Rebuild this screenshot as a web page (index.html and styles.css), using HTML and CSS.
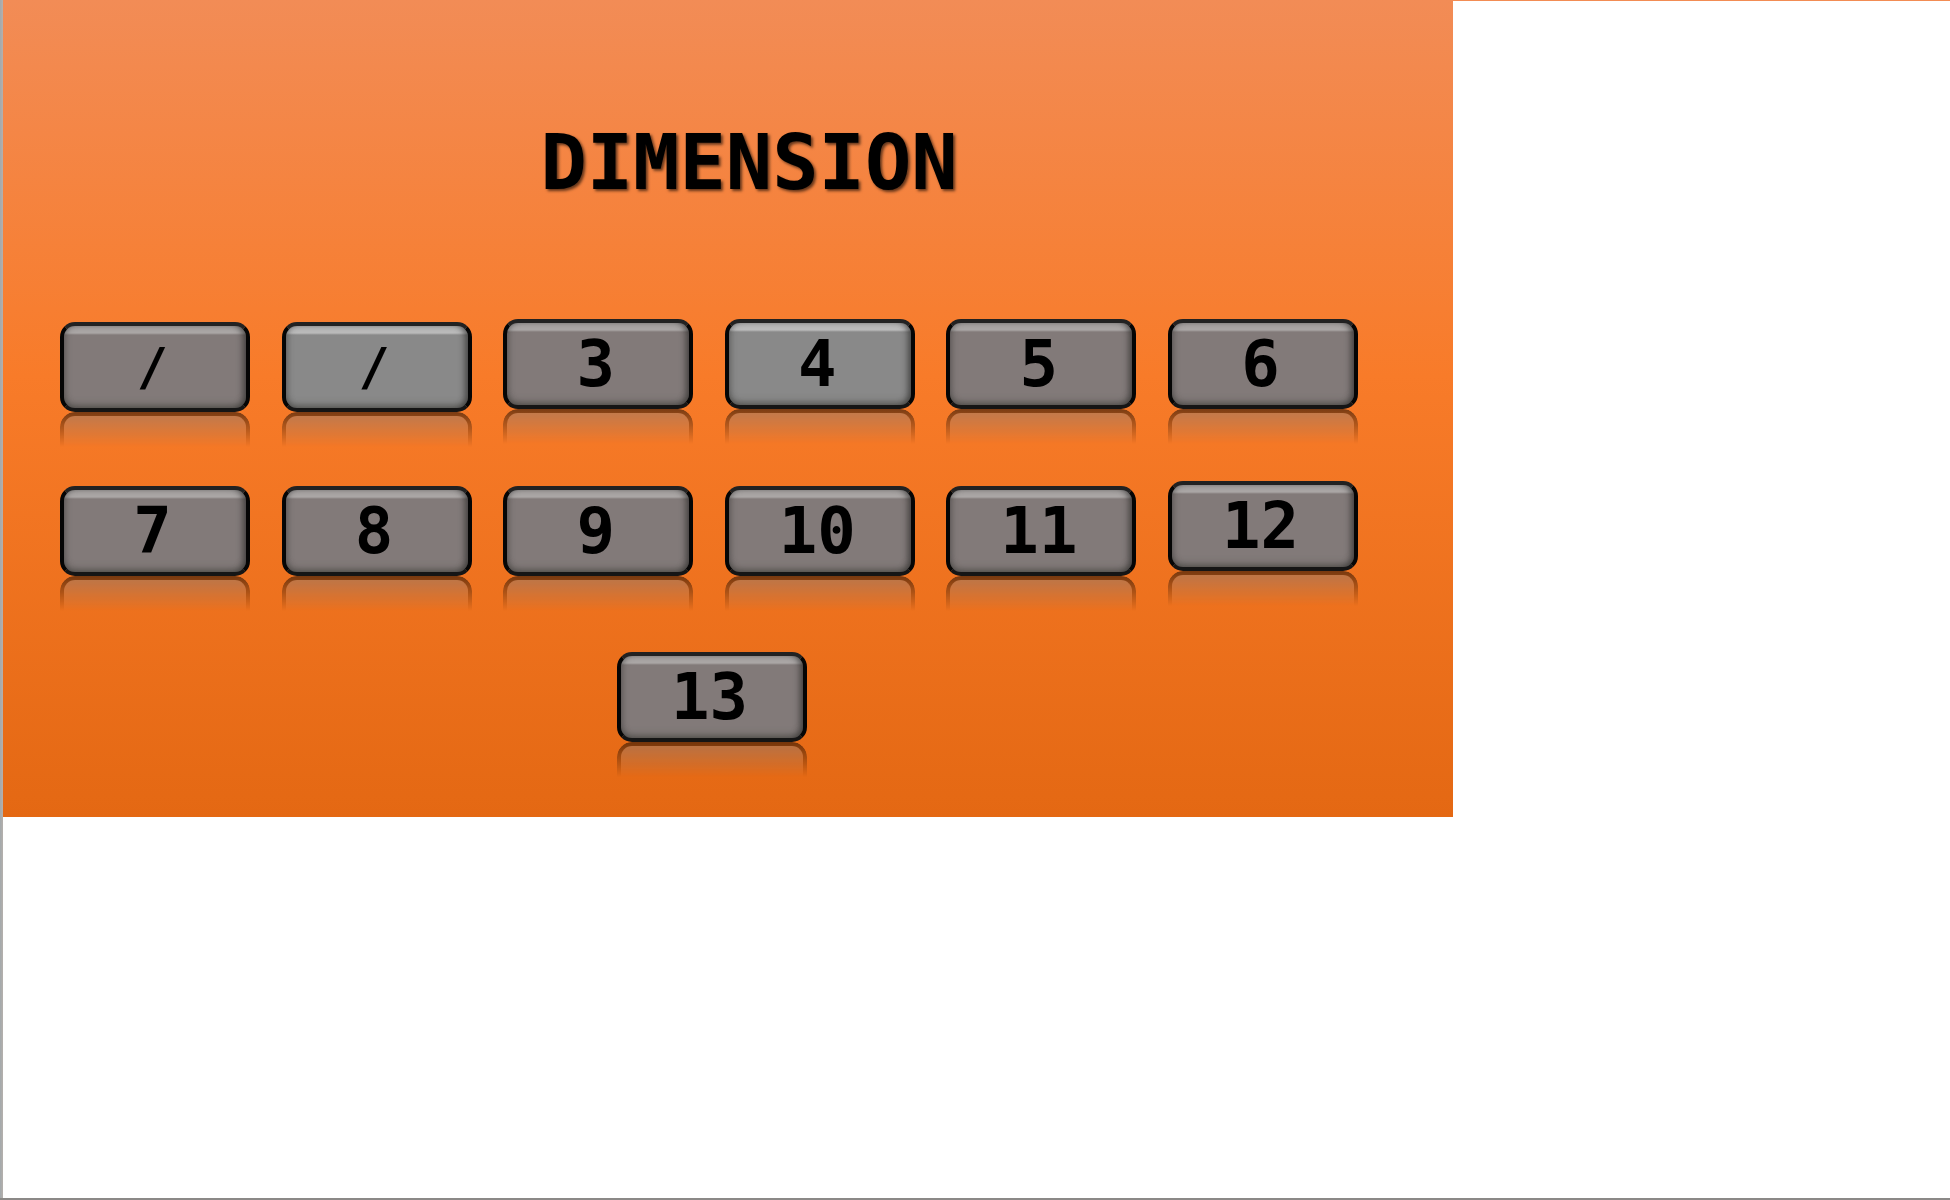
FILE: index.html
```
<!DOCTYPE html>
<html lang="en">
<head>
<meta charset="utf-8">
<title>Dimension</title>
<link rel="stylesheet" href="styles.css">
</head>
<body>
<main class="panel">
  <h1 class="title">DIMENSION</h1>
  <div class="levels">
    <div class="row row-first">
      <button type="button" class="key key-slash">/</button>
      <button type="button" class="key key-slash key-light">/</button>
      <button type="button" class="key key-raised">3</button>
      <button type="button" class="key key-raised key-light">4</button>
      <button type="button" class="key key-raised">5</button>
      <button type="button" class="key key-raised">6</button>
    </div>
    <div class="row row-second">
      <button type="button" class="key">7</button>
      <button type="button" class="key">8</button>
      <button type="button" class="key">9</button>
      <button type="button" class="key">10</button>
      <button type="button" class="key">11</button>
      <button type="button" class="key key-raised">12</button>
    </div>
    <div class="row row-last">
      <button type="button" class="key">13</button>
    </div>
  </div>
</main>
</body>
</html>
```
FILE: styles.css
```
* {
  box-sizing: border-box;
}

body {
  margin: 0;
  min-height: 100vh;
  padding-left: 3px;
  border-bottom: 2px solid #8b8987;
  background:
    linear-gradient(90deg, #a3a9ac, #b5b0ac) left / 3px 100% no-repeat,
    linear-gradient(#f28c54, #f28c54) top / 100% 1px no-repeat,
    #fff;
  font-family: "DejaVu Sans Mono", "Liberation Mono", monospace;
  color: #000;
}

.panel {
  max-width: 1450px;
  padding: 118px 95px 75px 57px;
  background: linear-gradient(#f28c56 0%, #f87b29 46%, #e46813 100%);
}

.title {
  margin: 0 0 111px;
  padding-left: 80px;
  font-size: 77px;
  line-height: 90px;
  font-weight: bold;
  text-align: center;
  text-shadow: 2px 2px 3px rgba(0, 0, 0, 0.6);
}

.row {
  display: flex;
  flex-wrap: wrap;
  justify-content: space-between;
  align-items: flex-end;
}

.row-first {
  min-height: 93px;
  margin-bottom: 69px;
}

.row-second {
  min-height: 95px;
  margin-bottom: 76px;
}

.row-last {
  justify-content: center;
  padding-left: 6px;
}

.key {
  position: relative;
  width: 190px;
  height: 90px;
  padding: 0 5px 1px 0;
  border: 4px solid #050505;
  border-top-color: #222;
  border-bottom-color: #151515;
  border-radius: 15px;
  background: linear-gradient(#aaa6a5 0 7px, #827a79 9px);
  box-shadow:
    inset 0 -6px 7px -3px rgba(65, 65, 60, 0.5),
    inset -5px 0 6px -2px rgba(30, 30, 30, 0.6),
    inset 4px 0 6px -3px rgba(50, 50, 50, 0.5);
  font-family: inherit;
  font-size: 64px;
  font-weight: bold;
  line-height: 64px;
  color: #000;
  cursor: pointer;
}

/* Mirror image fading out under each key */
.key::after {
  content: "";
  position: absolute;
  top: calc(100% + 4px);
  left: -4px;
  right: -4px;
  height: 31px;
  border: 4px solid #000;
  border-bottom: 0;
  border-radius: 15px 15px 0 0;
  background: #827a79;
  -webkit-mask-image: linear-gradient(rgba(0, 0, 0, 0.5), transparent);
  mask-image: linear-gradient(rgba(0, 0, 0, 0.5), transparent);
  pointer-events: none;
}

.key-light {
  background: linear-gradient(#bababa 0 7px, #898989 9px);
}

.key-slash {
  font-size: 52px;
}

.key-raised {
  align-self: flex-start;
}
```
